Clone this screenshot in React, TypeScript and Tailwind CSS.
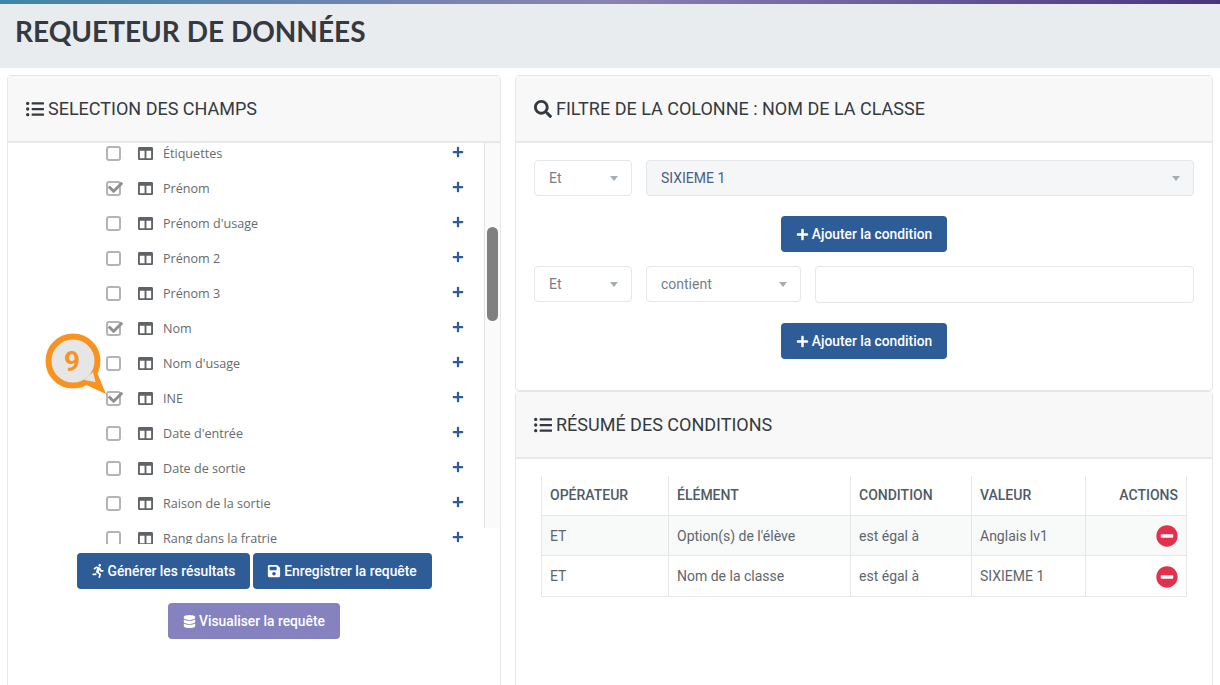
import React from "react";
import {
  FaCheck,
  FaColumns,
  FaDatabase,
  FaListUl,
  FaMinusCircle,
  FaPlus,
  FaRunning,
  FaSave,
  FaSearch,
} from "react-icons/fa";

const fields = [
  { label: "Étiquettes", checked: false },
  { label: "Prénom", checked: true },
  { label: "Prénom d'usage", checked: false },
  { label: "Prénom 2", checked: false },
  { label: "Prénom 3", checked: false },
  { label: "Nom", checked: true },
  { label: "Nom d'usage", checked: false },
  { label: "INE", checked: true },
  { label: "Date d'entrée", checked: false },
  { label: "Date de sortie", checked: false },
  { label: "Raison de la sortie", checked: false },
  { label: "Rang dans la fratrie", checked: false },
];

const conditions = [
  { op: "ET", element: "Option(s) de l'élève", condition: "est égal à", value: "Anglais lv1", height: "h-[40px]" },
  { op: "ET", element: "Nom de la classe", condition: "est égal à", value: "SIXIEME 1", height: "h-[41px]" },
];

function CardHeader({ icon, title }: { icon: React.ReactNode; title: string }) {
  return (
    <div className="flex h-[67px] items-center gap-[4px] border-b-2 border-[#e8e8e8] bg-[#f8f8f8] pl-[18px] text-[18px] text-[#343a40]">
      {icon}
      <span>{title}</span>
    </div>
  );
}

function FieldRow({ label, checked }: { label: string; checked: boolean }) {
  return (
    <div className="flex h-[35px] items-center pl-[98px]">
      <span className="relative h-[15px] w-[15px] rounded-[3px] border-2 border-[#b4b4b4] bg-white">
        {checked && <FaCheck className="absolute -top-[3px] left-[0px] text-[15px] text-[#8f8f8f]" />}
      </span>
      <FaColumns className="ml-[17px] text-[15px] text-[#5f6368]" />
      <span className="ml-[10px] mt-[1px] flex-1 font-['Open_Sans',sans-serif] text-[12.6px] text-[#666a6e]">{label}</span>
      <FaPlus className="mr-[20px] -mt-[4px] text-[12px] text-[#2d5c97]" />
    </div>
  );
}

function Select({ label, className, filled }: { label: string; className: string; filled?: boolean }) {
  return (
    <div
      className={`flex h-[36px] items-center justify-between rounded-[4px] border border-[#e3e7ea] pl-[14px] pr-[13px] text-[14px] ${
        filled ? "bg-[#f5f6f7] text-[#4a5f82]" : "bg-white text-[#73808c]"
      } ${className}`}
    >
      <span>{label}</span>
      <span className="h-0 w-0 border-x-[4px] border-t-[5px] border-x-transparent border-t-[#a5adb4]" />
    </div>
  );
}

function AddButton() {
  return (
    <button className="flex h-[36px] w-[166px] items-center justify-center gap-[3px] rounded-[4px] bg-[#2d5c97] text-[13.8px] font-medium text-white">
      <FaPlus className="text-[13px]" />
      Ajouter la condition
    </button>
  );
}

function Bubble() {
  return (
    <div className="absolute left-[40px] top-[330px] h-[70px] w-[72px]">
      <svg viewBox="0 0 72 70" className="h-full w-full">
        <path d="M44 54 66 64 56 40Z" fill="#f7931e" />
        <circle cx="33" cy="31" r="24.500" fill="#e6e6e6" stroke="#f7931e" strokeWidth="6" />
        <path d="M44 50 53 42 55.500 52Z" fill="#e6e6e6" />
      </svg>
      <span className="absolute left-[22px] top-[13px] w-[20px] text-center text-[28px] font-bold leading-[38px] text-[#f7931e]">
        9
      </span>
    </div>
  );
}

export default function App() {
  return (
    <div className="relative h-[685px] overflow-hidden bg-white font-['Roboto',sans-serif]">
      <div className="h-1 bg-gradient-to-r from-[#3d86a8] via-[#8a83b0] to-[#4a3380]" />
      <div className="flex h-[64px] items-start bg-[#e9ecef] pl-[15px] pt-[7px]">
        <h1 className="font-['Lato',sans-serif] text-[28px] font-bold leading-[40px] text-[#343a40]">
          REQUETEUR DE DONNÉES
        </h1>
      </div>

      <div className="mt-[7px] flex gap-[14px] pl-[7px]">
        {/* colonne de gauche */}
        <div className="h-[640px] w-[494px] rounded-t-[4px] border border-[#e6e6e6]">
          <CardHeader icon={<FaListUl className="text-[18px]" />} title="SELECTION DES CHAMPS" />
          <div className="flex">
            <div className="h-[401px] flex-1 overflow-hidden">
              <div className="-mt-[7px]">
                {fields.map((f) => (
                  <FieldRow key={f.label} label={f.label} checked={f.checked} />
                ))}
              </div>
            </div>
            <div className="h-[385px] w-[16px] border-l border-[#e2e2e2] bg-[#fafafa] pl-[2px] pt-[84px]">
              <div className="h-[94px] w-[11px] rounded-[6px] bg-[#808080]" />
            </div>
          </div>
          <div className="mt-[9px] flex justify-center gap-[3px]">
            <button className="flex h-[36px] w-[173px] items-center justify-center gap-[3px] rounded-[4px] bg-[#2d5c97] text-[13.8px] font-medium text-white">
              <FaRunning className="text-[14px]" />
              Générer les résultats
            </button>
            <button className="flex h-[36px] w-[179px] items-center justify-center gap-[3px] rounded-[4px] bg-[#2d5c97] text-[13.8px] font-medium text-white">
              <FaSave className="text-[14px]" />
              Enregistrer la requête
            </button>
          </div>
          <button className="ml-[160px] mt-[14px] flex h-[36px] w-[172px] items-center justify-center gap-[3px] rounded-[4px] bg-[#8582bf] text-[13.8px] font-medium text-white">
            <FaDatabase className="text-[13px]" />
            Visualiser la requête
          </button>
        </div>

        {/* colonne de droite */}
        <div className="w-[698px]">
          <div className="h-[316px] rounded-[4px] border border-[#e6e6e6]">
            <CardHeader icon={<FaSearch className="text-[18px]" />} title="FILTRE DE LA COLONNE : NOM DE LA CLASSE" />
            <div className="flex gap-[14px] pl-[18px] pt-[17px]">
              <Select label="Et" className="w-[98px]" />
              <Select label="SIXIEME 1" className="w-[548px]" filled />
            </div>
            <div className="mt-[20px] flex justify-center">
              <AddButton />
            </div>
            <div className="mt-[14px] flex gap-[14px] pl-[18px]">
              <Select label="Et" className="w-[98px]" />
              <Select label="contient" className="w-[155px]" />
              <div className="h-[37px] w-[379px] rounded-[4px] border border-[#e3e7ea] bg-white" />
            </div>
            <div className="mt-[20px] flex justify-center">
              <AddButton />
            </div>
          </div>

          <div className="h-[296px] rounded-t-[4px] border border-[#e6e6e6]">
            <CardHeader icon={<FaListUl className="text-[18px]" />} title="RÉSUMÉ DES CONDITIONS" />
            <div className="px-[25px] pt-[17px]">
              <table className="w-[645px] table-fixed border-collapse text-[14px] text-[#5d666e]">
                <colgroup>
                  <col className="w-[127px]" />
                  <col className="w-[182px]" />
                  <col className="w-[121px]" />
                  <col className="w-[114px]" />
                  <col className="w-[101px]" />
                </colgroup>
                <thead>
                  <tr className="h-[39px] text-left font-medium text-[#4f5b66]">
                    <th className="border-x border-b border-[#e4e8ea] pl-[8px] font-medium">OPÉRATEUR</th>
                    <th className="border-x border-b border-[#e4e8ea] pl-[8px] font-medium">ÉLÉMENT</th>
                    <th className="border-x border-b border-[#e4e8ea] pl-[8px] font-medium">CONDITION</th>
                    <th className="border-x border-b border-[#e4e8ea] pl-[8px] font-medium">VALEUR</th>
                    <th className="border-x border-b border-[#e4e8ea] pr-[8px] text-right font-medium">ACTIONS</th>
                  </tr>
                </thead>
                <tbody>
                  {conditions.map((c, i) => (
                    <tr key={c.element} className={`${c.height} ${i === 0 ? "bg-[#f8faf9]" : "bg-white"}`}>
                      <td className="border border-[#e4e8ea] pl-[8px] pt-[2px]">{c.op}</td>
                      <td className="border border-[#e4e8ea] pl-[8px] pt-[2px]">{c.element}</td>
                      <td className="border border-[#e4e8ea] pl-[8px] pt-[2px]">{c.condition}</td>
                      <td className="border border-[#e4e8ea] pl-[8px] pt-[2px]">{c.value}</td>
                      <td className="border border-[#e4e8ea] pr-[8px] pt-[2px]">
                        <FaMinusCircle className="ml-auto text-[22px] text-[#e5304d]" />
                      </td>
                    </tr>
                  ))}
                </tbody>
              </table>
            </div>
          </div>
        </div>
      </div>

      <Bubble />
    </div>
  );
}
